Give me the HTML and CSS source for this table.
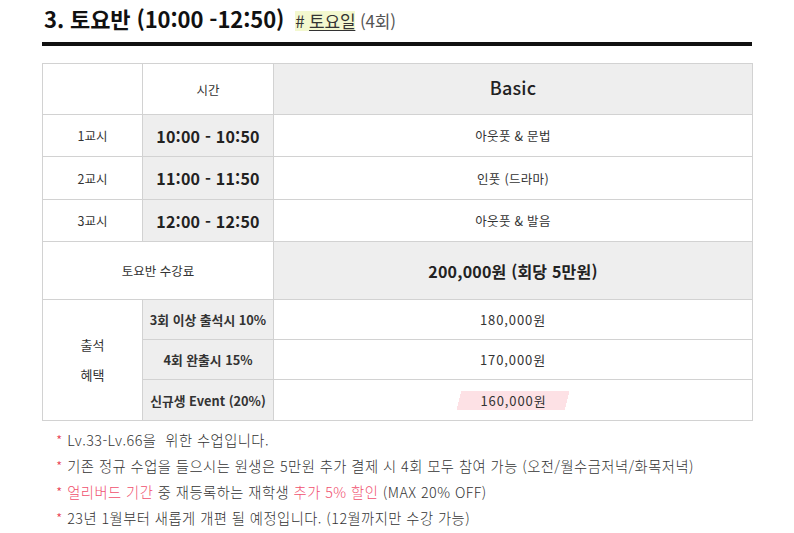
FILE: index.html
```html
<!DOCTYPE html>
<html lang="ko">
<head>
<meta charset="utf-8">
<link rel="stylesheet" href="styles.css">
</head>
<body>
<div class="wrap">
  <div class="title-row">
    <h2 class="title">3. 토요반 (10:00 -12:50)</h2>
    <span class="tag"><span class="tag-hl"># <u>토요일</u></span> <span class="tag-count">(4회)</span></span>
  </div>
  <div class="bar"></div>
  <table class="schedule">
    <colgroup>
      <col class="c1"><col class="c2"><col class="c3">
    </colgroup>
    <tr class="r-head">
      <td></td>
      <td>시간</td>
      <td class="grey basic">Basic</td>
    </tr>
    <tr class="r-time">
      <td>1교시</td>
      <td class="grey time">10:00 - 10:50</td>
      <td class="subj">아웃풋 &amp; 문법</td>
    </tr>
    <tr class="r-time r-mid">
      <td>2교시</td>
      <td class="grey time">11:00 - 11:50</td>
      <td class="subj">인풋 (드라마)</td>
    </tr>
    <tr class="r-time">
      <td>3교시</td>
      <td class="grey time">12:00 - 12:50</td>
      <td class="subj">아웃풋 &amp; 발음</td>
    </tr>
    <tr class="r-fee">
      <td colspan="2">토요반 수강료</td>
      <td class="grey fee">200,000원 (회당 5만원)</td>
    </tr>
    <tr class="r-ben">
      <td rowspan="3" class="ben-title">출석<br>혜택</td>
      <td class="grey cond">3회 이상 출석시 10%</td>
      <td class="price">180,000원</td>
    </tr>
    <tr class="r-ben">
      <td class="grey cond">4회 완출시 15%</td>
      <td class="price">170,000원</td>
    </tr>
    <tr class="r-ben r-last">
      <td class="grey cond">신규생 Event (20%)</td>
      <td class="price"><span class="pink-hl">160,000원</span></td>
    </tr>
  </table>
  <ul class="notes">
    <li><span class="ast">*</span> Lv.33-Lv.66을&nbsp; 위한 수업입니다.</li>
    <li><span class="ast">*</span> 기존 정규 수업을 들으시는 원생은 5만원 추가 결제 시 4회 모두 참여 가능 (오전/월수금저녁/화목저녁)</li>
    <li><span class="ast">*</span> <span class="red">얼리버드 기간</span> 중 재등록하는 재학생 <span class="red">추가 5% 할인</span> (MAX 20% OFF)</li>
    <li><span class="ast">*</span> 23년 1월부터 새롭게 개편 될 예정입니다. (12월까지만 수강 가능)</li>
  </ul>
</div>
</body>
</html>
```

FILE: styles.css
```css
* { box-sizing: border-box; }
html, body { margin: 0; padding: 0; background: #fff; }
body {
  font-family: "Noto Sans CJK KR", "Noto Sans", sans-serif;
  color: #222;
}
.wrap {
  width: 710px;
  margin-left: 42px;
}
.title-row {
  display: flex;
  align-items: baseline;
  height: 42px;
  padding-top: 3px;
  padding-left: 2px;
}
.title {
  margin: 0;
  font-size: 22px;
  font-weight: 700;
  letter-spacing: -0.1px;
  color: #111;
  line-height: 30px;
}
.tag {
  margin-left: 11px;
  font-size: 17px;
  color: #333;
  letter-spacing: -0.2px;
}
.tag-hl {
  background: linear-gradient(transparent 12%, #f3f8cf 12%, #f3f8cf 92%, transparent 92%);
}
.tag-hl u { text-underline-offset: 2px; }
.tag-count { color: #555; }
.bar {
  height: 4px;
  background: #111;
}
.schedule {
  margin-top: 17px;
  width: 710px;
  border-collapse: collapse;
  table-layout: fixed;
  font-size: 12.5px;
  color: #333;
}
.c1 { width: 100px; }
.c2 { width: 131px; }
.c3 { width: 479px; }
.schedule td {
  border: 1px solid #d2d2d2;
  text-align: center;
  vertical-align: middle;
  padding: 0;
}
.grey { background: #eeeeee; }
.r-head td { height: 51px; }
.r-time td { height: 42px; }
.r-mid td { height: 43px; }
.r-fee td { height: 58px; }
.r-ben td { height: 40px; }
.r-last td { height: 41px; }
.basic {
  font-size: 18px;
  font-weight: 500;
  color: #222;
  padding-bottom: 5px !important;
  letter-spacing: 0.2px;
}
.time {
  font-size: 16px;
  font-weight: 700;
  color: #222;
  letter-spacing: 0.2px;
}
.subj { letter-spacing: 0.3px; }
.fee {
  font-size: 16px;
  font-weight: 700;
  color: #222;
  letter-spacing: 0.2px;
}
.cond {
  font-weight: 700;
  font-size: 12.8px;
}
.price { font-size: 13px; letter-spacing: 0.9px; }
.ben-title {
  line-height: 30px;
  font-size: 13px;
}
.pink-hl {
  display: inline-block;
  padding: 0 26px 0 27px;
  line-height: 19px;
  background: linear-gradient(104deg, transparent 8px, #fde1e5 8px, #fde1e5 calc(100% - 8px), transparent calc(100% - 8px));
}
.notes {
  list-style: none;
  margin: 6px 0 0 0;
  padding: 0 0 0 14px;
  font-size: 14.3px;
  line-height: 26px;
  color: #333;
  font-weight: 300;
  letter-spacing: 0.45px;
}
.ast { color: #e8384f; }
.red { color: #f0506e; }
```
